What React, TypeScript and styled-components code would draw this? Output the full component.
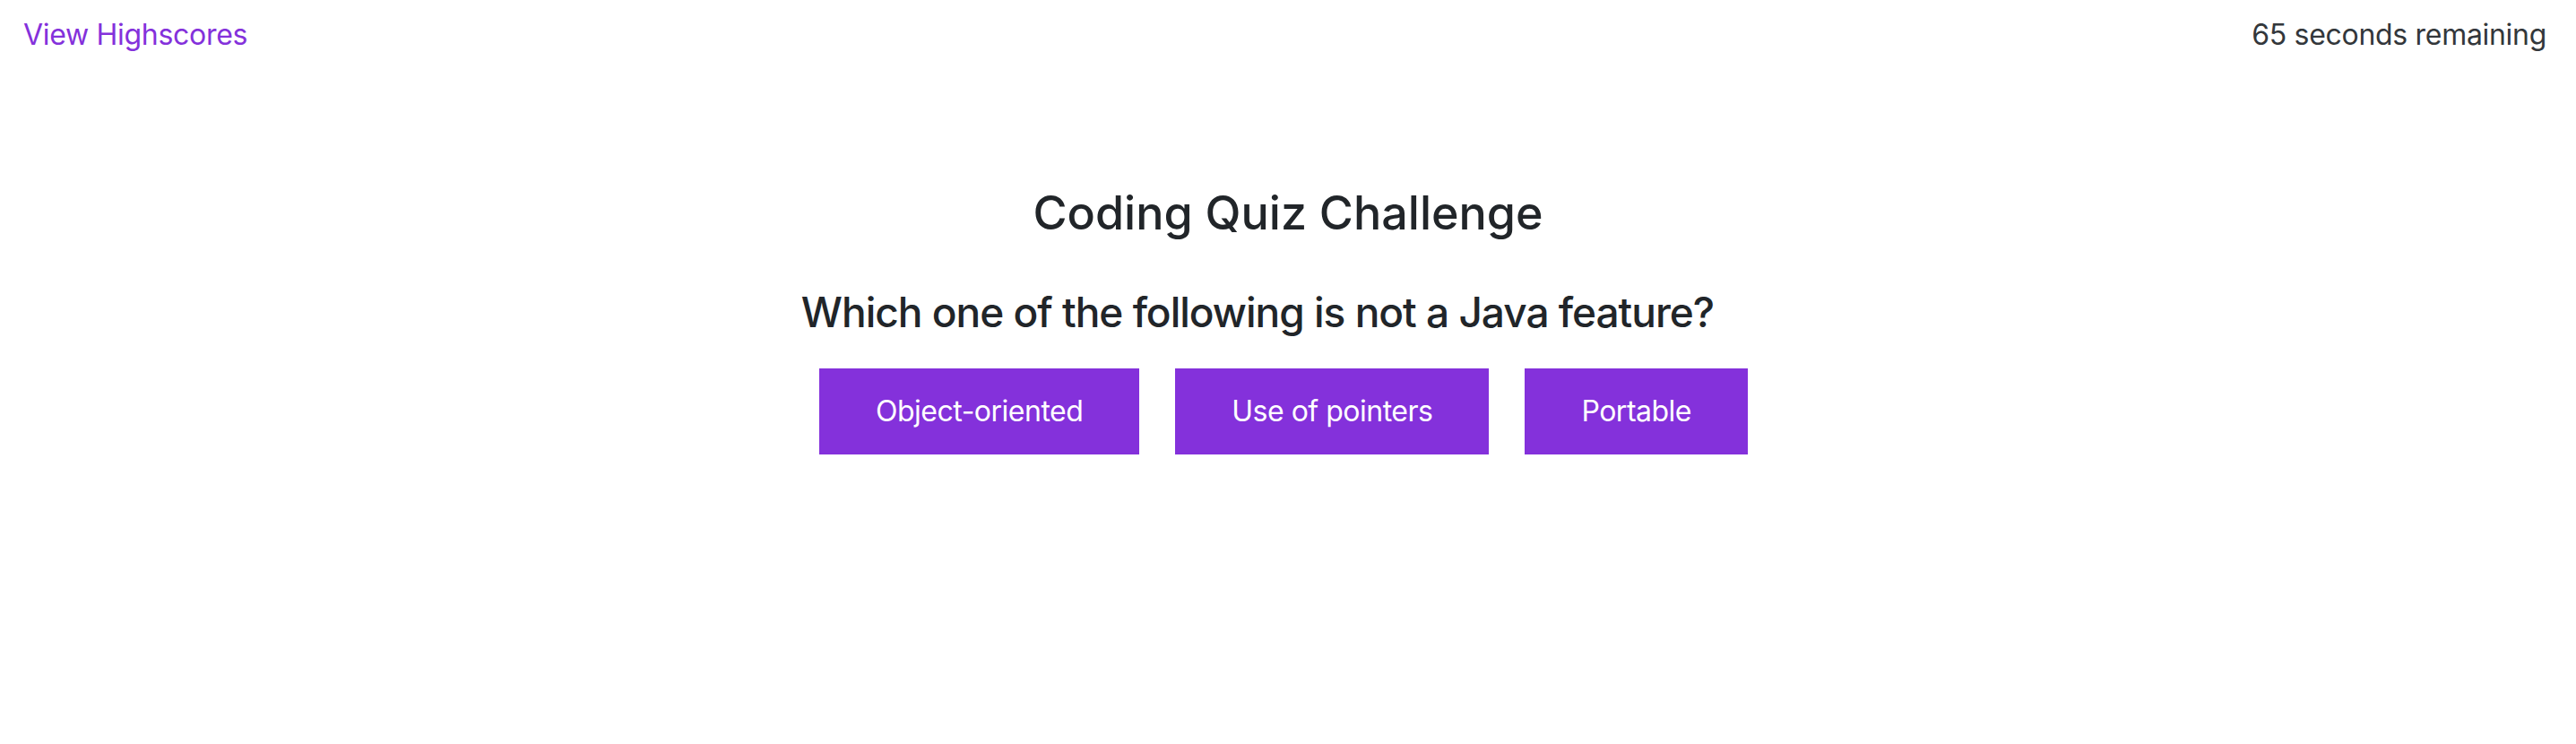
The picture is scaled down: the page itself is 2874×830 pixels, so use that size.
import React from "react";
import styled, { createGlobalStyle } from "styled-components";

const GlobalStyle = createGlobalStyle`
  html, body {
    margin: 0;
    padding: 0;
    background: #ffffff;
  }
  body {
    font-family: Inter, "Noto Sans", "Liberation Sans", sans-serif;
    color: #212529;
  }
`;

const Page = styled.div`
  display: flex;
  flex-direction: column;
  min-height: 830px;
`;

const Header = styled.header`
  display: flex;
  justify-content: space-between;
  align-items: center;
  padding: 15px 33px 0 26px;
`;

const HighscoreLink = styled.a`
  color: #8431db;
  font-size: 32px;
  line-height: 48px;
  letter-spacing: -0.3px;
  text-decoration: none;
  cursor: pointer;
`;

const Timer = styled.div`
  font-size: 32px;
  line-height: 48px;
  letter-spacing: -0.3px;
  color: #33373b;
`;

const Main = styled.main`
  display: flex;
  flex-direction: column;
  align-items: center;
  padding-top: 144px;
`;

const Title = styled.h1`
  margin: 0;
  font-size: 52px;
  line-height: 62px;
  font-weight: 500;
`;

const Question = styled.h2`
  margin: 50px 0 0;
  padding-right: 68px;
  font-size: 46px;
  line-height: 58px;
  font-weight: 500;
  letter-spacing: -1px;
`;

const Choices = styled.div`
  display: flex;
  gap: 40px;
  margin-top: 34px;
  padding-right: 10px;
`;

const ChoiceButton = styled.button`
  background: #8431db;
  color: #ffffff;
  border: none;
  border-radius: 0;
  padding: 24px 63px;
  font-family: inherit;
  font-size: 32px;
  line-height: 48px;
  letter-spacing: -0.5px;
  cursor: pointer;
`;

const choices = ["Object-oriented", "Use of pointers", "Portable"];

export default function App() {
  return (
    <Page>
      <GlobalStyle />
      <Header>
        <HighscoreLink>View Highscores</HighscoreLink>
        <Timer>65 seconds remaining</Timer>
      </Header>
      <Main>
        <Title>Coding Quiz Challenge</Title>
        <Question>Which one of the following is not a Java feature?</Question>
        <Choices>
          {choices.map((c) => (
            <ChoiceButton key={c}>{c}</ChoiceButton>
          ))}
        </Choices>
      </Main>
    </Page>
  );
}
